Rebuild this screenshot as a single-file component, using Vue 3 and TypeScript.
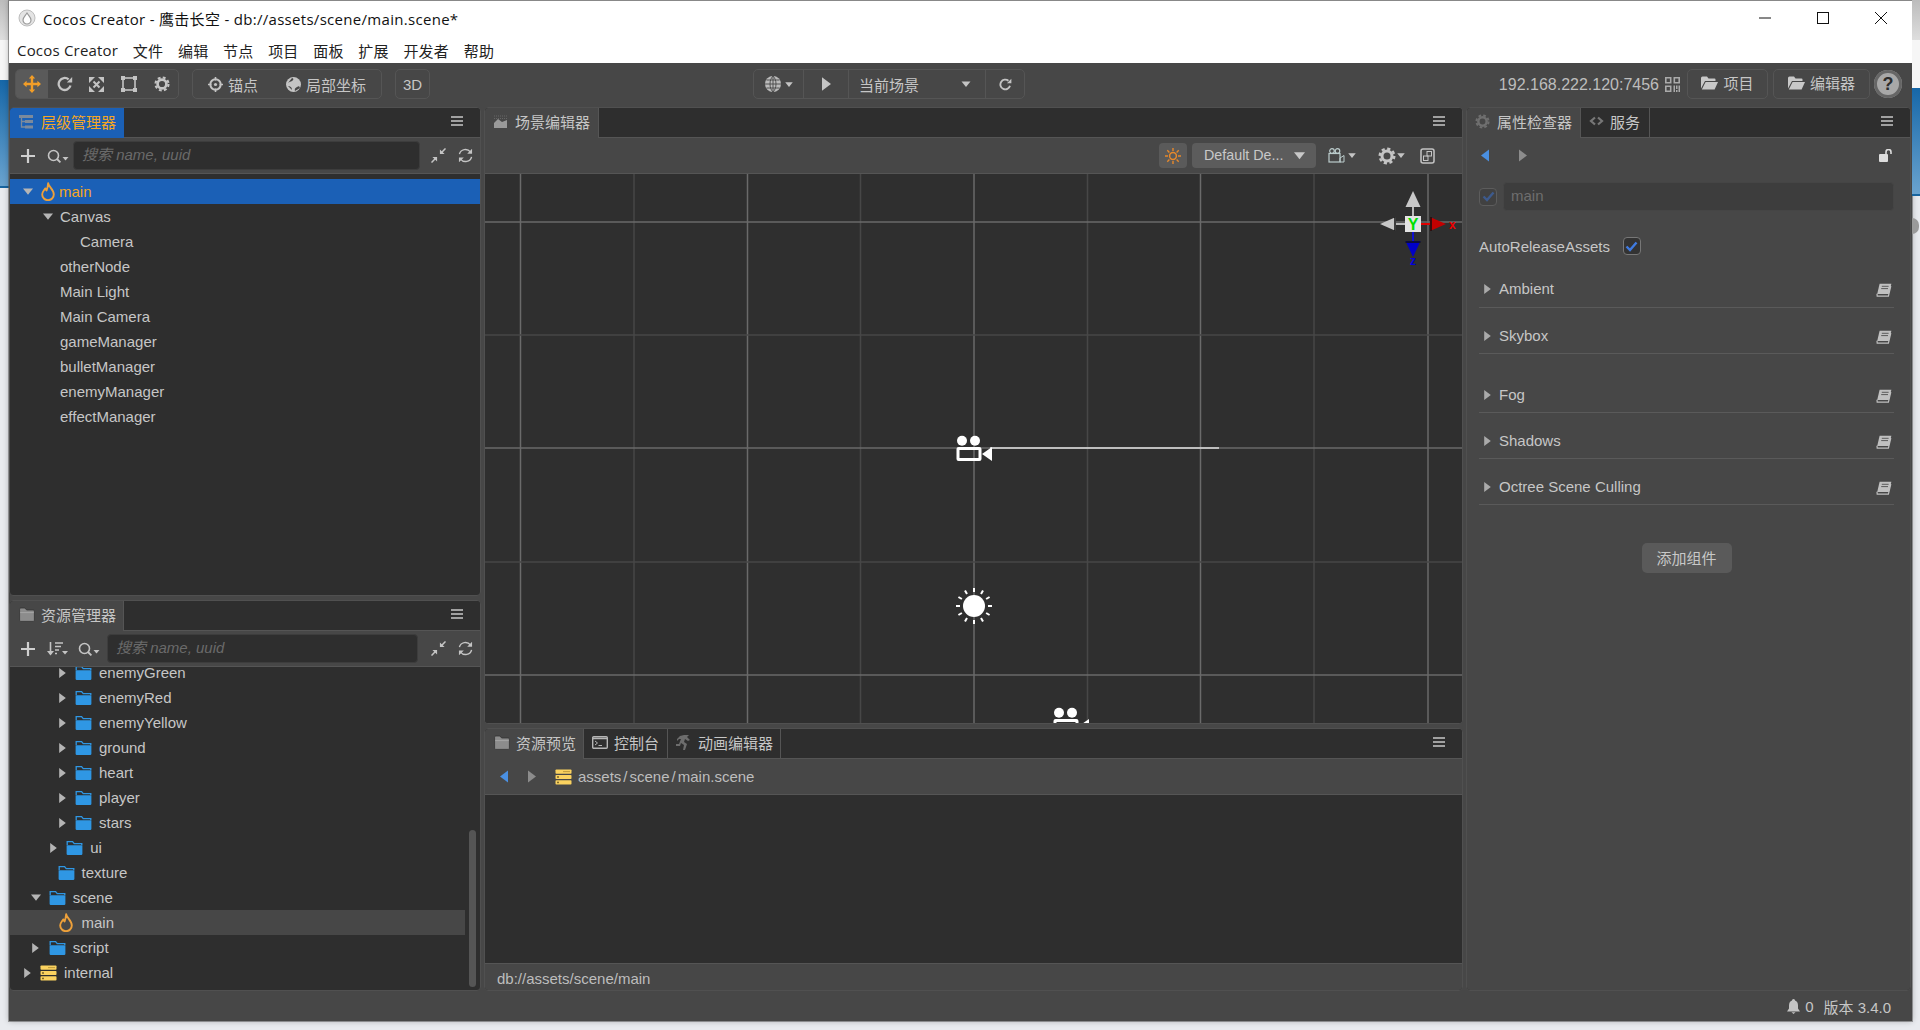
<script setup lang="ts">
interface Row { name: string; depth: number; arrow?: 'open' | 'closed'; icon?: string; cls?: string }

const menus = ['Cocos Creator', '文件', '编辑', '节点', '项目', '面板', '扩展', '开发者', '帮助']

const nodes: Row[] = [
  { name: 'main', depth: 0, arrow: 'open', icon: 'drop', cls: 'selected' },
  { name: 'Canvas', depth: 1, arrow: 'open' },
  { name: 'Camera', depth: 2 },
  { name: 'otherNode', depth: 1 },
  { name: 'Main Light', depth: 1 },
  { name: 'Main Camera', depth: 1 },
  { name: 'gameManager', depth: 1 },
  { name: 'bulletManager', depth: 1 },
  { name: 'enemyManager', depth: 1 },
  { name: 'effectManager', depth: 1 },
]

const assets: Row[] = [
  { name: 'enemyGreen', depth: 4, arrow: 'closed', icon: 'folder' },
  { name: 'enemyRed', depth: 4, arrow: 'closed', icon: 'folder' },
  { name: 'enemyYellow', depth: 4, arrow: 'closed', icon: 'folder' },
  { name: 'ground', depth: 4, arrow: 'closed', icon: 'folder' },
  { name: 'heart', depth: 4, arrow: 'closed', icon: 'folder' },
  { name: 'player', depth: 4, arrow: 'closed', icon: 'folder' },
  { name: 'stars', depth: 4, arrow: 'closed', icon: 'folder' },
  { name: 'ui', depth: 3, arrow: 'closed', icon: 'folder' },
  { name: 'texture', depth: 2, icon: 'folder' },
  { name: 'scene', depth: 1, arrow: 'open', icon: 'folder' },
  { name: 'main', depth: 2, icon: 'drop', cls: 'hover' },
  { name: 'script', depth: 1, arrow: 'closed', icon: 'folder' },
  { name: 'internal', depth: 0, arrow: 'closed', icon: 'db' },
]

const vLines = [
  { x: 35.5, bright: true }, { x: 149, bright: false }, { x: 262.5, bright: true },
  { x: 375.5, bright: false }, { x: 489, bright: true }, { x: 602.5, bright: false },
  { x: 715.5, bright: true }, { x: 829, bright: false }, { x: 943, bright: true },
]
const hLines = [
  { y: 48, bright: true }, { y: 161, bright: false }, { y: 274, bright: true },
  { y: 388, bright: false }, { y: 501, bright: true },
]
const sunRays = Array.from({ length: 12 }, (_, i) => i * 30)

const sections = [
  { name: 'Ambient', gap: false },
  { name: 'Skybox', gap: false },
  { name: 'Fog', gap: true },
  { name: 'Shadows', gap: false },
  { name: 'Octree Scene Culling', gap: false },
]
</script>

<template>
  <div class="page">
    <svg class="defs" width="0" height="0" aria-hidden="true">
      <symbol id="folder" viewBox="0 0 17 16">
        <path d="M.6 5.2H16.4V13.8a1.2 1.2 0 0 1-1.2 1.2H1.8a1.2 1.2 0 0 1-1.2-1.2Z" fill="#2f97e4" />
        <path d="M1.2 5V1.6H6.6L8.2 3.6H15.8V5" fill="none" stroke="#2f97e4" stroke-width="1.3" />
      </symbol>
      <symbol id="drop" viewBox="0 0 14 19">
        <path d="M7.2 1.2C7.4 4.5 12.8 7.6 12.8 12.4A5.8 5.8 0 0 1 1.2 12.4C1.2 9.8 3 8.4 4.2 6.4C4.6 7.4 5 8 5.6 8.4C6.4 6.4 7 3.6 7.2 1.2Z" fill="none" stroke="#eda03a" stroke-width="1.9" stroke-linejoin="round" />
      </symbol>
      <symbol id="db" viewBox="0 0 17 16">
        <rect x=".5" y=".5" width="16" height="4.2" rx=".8" fill="#fad25f" />
        <rect x=".5" y="5.9" width="16" height="4.2" rx=".8" fill="#fad25f" />
        <rect x=".5" y="11.3" width="16" height="4.2" rx=".8" fill="#fad25f" />
        <circle cx="3" cy="8" r=".9" fill="#6a5620" />
        <circle cx="3" cy="13.4" r=".9" fill="#6a5620" />
        <rect x="8" y="2.2" width="7" height=".9" fill="#b8963a" />
      </symbol>
      <symbol id="tri-r" viewBox="0 0 8 12"><path d="M0 0 8 6 0 12Z" fill="currentColor" /></symbol>
      <symbol id="tri-d" viewBox="0 0 12 8"><path d="M0 .5H12L6 8Z" fill="currentColor" /></symbol>
      <symbol id="tri-l" viewBox="0 0 8 12"><path d="M8 0 0 6 8 12Z" fill="currentColor" /></symbol>
      <symbol id="book" viewBox="0 0 16 14">
        <path d="M3.6.8H15.4L12.8 11H1.2Z" fill="#c0c0c0" />
        <path d="M1 10.8 1.2 13.2H12.4L14.8 3" fill="none" stroke="#c0c0c0" stroke-width="1.2" />
        <path d="M5.8 3.3H12.6M5.2 5.6H12" stroke="#5a5a5a" stroke-width="1" />
      </symbol>
      <symbol id="gear" viewBox="0 0 18 18">
        <circle cx="9" cy="9" r="5" fill="none" stroke="currentColor" stroke-width="3" />
        <circle cx="9" cy="9" r="7.3" fill="none" stroke="currentColor" stroke-width="2.4" stroke-dasharray="3.2 2.53" />
      </symbol>
      <symbol id="menu" viewBox="0 0 12 10">
        <path d="M0 1H12M0 5H12M0 9H12" stroke="#c8c8c8" stroke-width="1.5" />
      </symbol>
      <symbol id="plus" viewBox="0 0 14 14"><path d="M7 0V14M0 7H14" stroke="#cfcfcf" stroke-width="2.2" /></symbol>
      <symbol id="search" viewBox="0 0 22 14">
        <circle cx="6.5" cy="6.5" r="5" fill="none" stroke="#c4c4c4" stroke-width="1.6" />
        <path d="M10 10 13.4 13.4" stroke="#c4c4c4" stroke-width="1.8" />
        <path d="M15.5 8H21.5L18.5 11.5Z" fill="#c4c4c4" />
      </symbol>
      <symbol id="collapse" viewBox="0 0 16 16">
        <path d="M15.5.5 10.5 5.5M0.5 15.5 5.5 10.5" stroke="#c4c4c4" stroke-width="1.6" />
        <path d="M9.5 1.5V6.5H14.5ZM1.5 9.5H6.5V14.5Z" fill="#c4c4c4" />
      </symbol>
      <symbol id="refresh" viewBox="0 0 16 16">
        <path d="M1.5 6.6A6.6 6.6 0 0 1 13.2 4.2M14.5 9.4A6.6 6.6 0 0 1 2.8 11.8" fill="none" stroke="#c4c4c4" stroke-width="1.5" />
        <path d="M15 .8V6H9.8ZM1 15.2V10H6.2Z" fill="#c4c4c4" />
      </symbol>
      <symbol id="reload" viewBox="0 0 16 16">
        <path d="M13.5 9.5A6 6 0 1 1 11.6 3.4" fill="none" stroke="currentColor" stroke-width="2.3" />
        <path d="M9.8 6.5H15.2V1Z" fill="currentColor" />
      </symbol>
      <symbol id="panel-folder" viewBox="0 0 16 15">
        <path d="M.6 2.2A1.2 1.2 0 0 1 1.8 1H6L7.6 3H14.2A1.2 1.2 0 0 1 15.4 4.2V13.4A1 1 0 0 1 14.4 14.4H1.6A1 1 0 0 1 .6 13.4Z" fill="#8c8c8c" stroke="#333" stroke-width=".8" />
        <path d="M1.2 5.6H14.8" stroke="#a5a5a5" stroke-width="1" />
      </symbol>
      <symbol id="globe" viewBox="0 0 18 18">
        <circle cx="9" cy="9" r="8" fill="#bbb" />
        <path d="M1 9H17M2.5 5H15.5M2.5 13H15.5M9 1V17M9 1C5 4.5 5 13.5 9 17M9 1C13 4.5 13 13.5 9 17" fill="none" stroke="#474747" stroke-width=".9" />
      </symbol>
      <symbol id="camera" viewBox="0 0 36 28">
        <circle cx="6" cy="5.7" r="5" fill="#fff" />
        <circle cx="19" cy="5.7" r="5" fill="#fff" />
        <rect x="2" y="13.500" width="22" height="11" rx=".6" fill="none" stroke="#fff" stroke-width="3" />
        <path d="M26 19 36 12V26Z" fill="#fff" />
      </symbol>
    </svg>

    <div class="desk desk-left">
      <div class="desk-top"></div>
      <div class="desk-white"></div>
      <div class="desk-blue"></div>
    </div>

    <div class="window">
      <header class="titlebar">
        <svg class="app-logo" viewBox="0 0 18 18" aria-hidden="true">
          <circle cx="9" cy="9" r="8" fill="#e4e4e4" stroke="#bdbdbd" />
          <path d="M9 3.5C9.5 6 13 8 13 11A4 4 0 0 1 5 11C5 8 8.5 6 9 3.5Z" fill="#fff" stroke="#999" stroke-width="1.2" />
        </svg>
        <span class="title-text">Cocos Creator - 鹰击长空 - db://assets/scene/main.scene*</span>
        <div class="win-ctrls">
          <svg class="win-btn" viewBox="0 0 12 12"><path d="M0 6H12" stroke="#111" stroke-width="1" /></svg>
          <svg class="win-btn" viewBox="0 0 12 12"><rect x=".5" y=".5" width="11" height="11" fill="none" stroke="#111" /></svg>
          <svg class="win-btn" viewBox="0 0 12 12"><path d="M0 0 12 12M12 0 0 12" stroke="#111" stroke-width="1" /></svg>
        </div>
      </header>
      <nav class="menubar">
        <span v-for="m in menus" :key="m">{{ m }}</span>
      </nav>

      <div class="editor">
        <div class="topbar">
          <div class="group g-tools">
            <button class="tool active">
              <svg width="18" height="18" viewBox="0 0 18 18"><path d="M9 0 12.2 3.6H10.2V7.8H14.4V5.8L18 9 14.4 12.2V10.2H10.2V14.4H12.2L9 18 5.8 14.4H7.8V10.2H3.6V12.2L0 9 3.6 5.8V7.8H7.8V3.6H5.8Z" fill="#f29d27" /></svg>
            </button>
            <button class="tool"><svg class="grey" width="16" height="16"><use href="#reload" /></svg></button>
            <button class="tool">
              <svg width="15" height="15" viewBox="0 0 15 15"><path d="M4.5 4.5 10.5 10.5M10.5 4.5 4.5 10.5" stroke="#c4c4c4" stroke-width="2" /><path d="M0 0H6L0 6ZM15 0H9L15 6ZM0 15H6L0 9ZM15 15H9L15 9Z" fill="#c4c4c4" /></svg>
            </button>
            <button class="tool">
              <svg width="16" height="16" viewBox="0 0 16 16"><rect x="2" y="2" width="12" height="12" fill="none" stroke="#c4c4c4" stroke-width="1.6" /><path d="M0 0H4V4H0ZM12 0H16V4H12ZM0 12H4V16H0ZM12 12H16V16H12Z" fill="#c4c4c4" /></svg>
            </button>
            <button class="tool"><svg class="grey" width="16" height="16"><use href="#gear" /></svg></button>
          </div>
          <div class="group g-pivot">
            <span class="pivot-item">
              <svg width="15" height="15" viewBox="0 0 15 15"><circle cx="7.5" cy="7.5" r="5.2" fill="none" stroke="#c4c4c4" stroke-width="2" /><circle cx="7.5" cy="7.5" r="1.6" fill="#c4c4c4" /><path d="M7.5 0V3.5M7.5 11.5V15M0 7.5H3.5M11.5 7.5H15" stroke="#c4c4c4" stroke-width="1.6" /></svg>
              锚点
            </span>
            <span class="pivot-item">
              <svg width="15" height="15" viewBox="0 0 15 15"><circle cx="7.5" cy="7.5" r="7.5" fill="#c4c4c4" /><path d="M2 6C4 4 6 5 7 3C8 2 7 1 6 1M9 14C8 11 11 10 13 9L14 11ZM2 9C4 9 6 10 6 13" fill="#474747" /></svg>
              局部坐标
            </span>
          </div>
          <div class="group g-3d">3D</div>
          <div class="group g-play">
            <span class="p-cell p-globe">
              <svg width="18" height="18"><use href="#globe" /></svg>
              <svg class="caret" width="8" height="5"><use href="#tri-d" /></svg>
            </span>
            <span class="p-cell p-run"><svg class="grey" width="9" height="16"><use href="#tri-r" /></svg></span>
            <span class="p-cell p-scene">
              当前场景
              <svg class="caret" width="10" height="6"><use href="#tri-d" /></svg>
            </span>
            <span class="p-cell p-reload"><svg class="grey" width="13" height="13"><use href="#reload" /></svg></span>
          </div>
          <div class="top-right">
            <span class="ip">192.168.222.120:7456</span>
            <svg class="qr" width="15" height="15" viewBox="0 0 15 15"><path d="M0 0H6.5V6.5H0ZM1.6 1.6V4.9H4.9V1.6ZM8.5 0H15V6.5H8.5ZM10.1 1.6V4.9H13.4V1.6ZM0 8.5H6.5V15H0ZM1.6 10.1V13.4H4.9V10.1Z" fill="#aaa" fill-rule="evenodd" /><path d="M8.5 8.5H10V15H8.5ZM11 8.5H12.5V12H11ZM13.5 8.5H15V15H13.5ZM11 13H12.5V15H11Z" fill="#aaa" /></svg>
            <button class="btn-open b-project">
              <svg width="17" height="14" viewBox="0 0 17 14"><path d="M0 2A1.5 1.5 0 0 1 1.5.5H6L7.5 2.5H13.5A1 1 0 0 1 14.5 3.5V5H4L0 12.5Z" fill="#c8c8c8" /><path d="M4.6 6H17L13.6 13.5H.8Z" fill="#c8c8c8" /></svg>
              项目
            </button>
            <button class="btn-open b-editor">
              <svg width="17" height="14" viewBox="0 0 17 14"><path d="M0 2A1.5 1.5 0 0 1 1.5.5H6L7.5 2.5H13.5A1 1 0 0 1 14.5 3.5V5H4L0 12.5Z" fill="#c8c8c8" /><path d="M4.6 6H17L13.6 13.5H.8Z" fill="#c8c8c8" /></svg>
              编辑器
            </button>
            <span class="help">?</span>
          </div>
        </div>

        <div class="workspace">
          <div class="col col-left">
            <section class="panel p-hier">
              <div class="tabs">
                <div class="tab tab-focus">
                  <svg width="14" height="14" viewBox="0 0 14 14"><path d="M0 0H14V3H0ZM6 5H14V8H6ZM6 10.500H14V13.500H6Z" fill="#7c8a9c" /><path d="M2.500 3V12H6M2.500 6.500H6" fill="none" stroke="#7c8a9c" stroke-width="1.300" /></svg>
                  层级管理器
                </div>
                <svg class="hamb" width="12" height="10"><use href="#menu" /></svg>
              </div>
              <div class="bar">
                <svg class="b-plus" width="14" height="14"><use href="#plus" /></svg>
                <svg class="b-search" width="22" height="14"><use href="#search" /></svg>
                <div class="search">搜索 name, uuid</div>
                <svg class="b-col" width="15" height="15"><use href="#collapse" /></svg>
                <svg class="b-ref" width="15" height="15"><use href="#refresh" /></svg>
              </div>
              <div class="tree hier-tree">
                <div v-for="n in nodes" :key="n.name" class="hrow" :class="n.cls" :style="{ paddingLeft: 10 + 20 * n.depth + 'px' }">
                  <span class="arrow">
                    <svg v-if="n.arrow === 'open'" width="10" height="7"><use href="#tri-d" /></svg>
                  </span>
                  <svg v-if="n.icon" class="hicon" width="14" height="19"><use :href="'#' + n.icon" /></svg>
                  <span class="label">{{ n.name }}</span>
                </div>
              </div>
            </section>

            <section class="panel p-assets">
              <div class="tabs">
                <div class="tab tab-asset">
                  <svg width="16" height="15"><use href="#panel-folder" /></svg>
                  资源管理器
                </div>
                <svg class="hamb" width="12" height="10"><use href="#menu" /></svg>
              </div>
              <div class="bar bar-assets">
                <svg class="b-plus" width="14" height="14"><use href="#plus" /></svg>
                <svg class="b-sort" width="21" height="14" viewBox="0 0 21 14"><path d="M3.500 0V12" stroke="#c4c4c4" stroke-width="1.600" /><path d="M0 9H7L3.500 13.500Z" fill="#c4c4c4" /><path d="M8 1H16M8 4.500H14M8 8H12M8 11.500H10" stroke="#c4c4c4" stroke-width="1.500" /><path d="M15 9H21L18 12.500Z" fill="#c4c4c4" /></svg>
                <svg class="b-search" width="22" height="14"><use href="#search" /></svg>
                <div class="search">搜索 name, uuid</div>
                <svg class="b-col" width="15" height="15"><use href="#collapse" /></svg>
                <svg class="b-ref" width="15" height="15"><use href="#refresh" /></svg>
              </div>
              <div class="tree asset-tree">
                <div class="asset-scroll">
                  <div v-for="a in assets" :key="a.name + a.depth" class="arow" :class="a.cls" :style="{ paddingLeft: 9 + 8.75 * a.depth + 'px' }">
                    <span class="arrow">
                      <svg v-if="a.arrow === 'open'" width="10" height="7"><use href="#tri-d" /></svg>
                      <svg v-else-if="a.arrow === 'closed'" width="7" height="10"><use href="#tri-r" /></svg>
                    </span>
                    <span class="aicon">
                      <svg v-if="a.icon === 'drop'" width="14" height="19"><use href="#drop" /></svg>
                      <svg v-else width="17" height="16"><use :href="'#' + a.icon" /></svg>
                    </span>
                    <span class="label">{{ a.name }}</span>
                  </div>
                </div>
                <div class="scrollbar"></div>
              </div>
            </section>
          </div>

          <div class="col col-center">
            <section class="panel p-scene-panel">
              <div class="tabs">
                <div class="tab tab-scene">
                  <svg width="13" height="13" viewBox="0 0 13 13"><path d="M0 13V8L4 4 8 7 13 5V13Z" fill="#9a9a9a" /><path d="M0 1H13M0 3.500H13" stroke="#666" stroke-dasharray="1 1" /></svg>
                  场景编辑器
                </div>
                <svg class="hamb" width="12" height="10"><use href="#menu" /></svg>
              </div>
              <div class="scene-bar">
                <span class="light-btn">
                  <svg width="16" height="16" viewBox="0 0 16 16"><circle cx="8" cy="8" r="3.400" fill="none" stroke="#e8892b" stroke-width="1.500" /><path d="M8 0V3M8 13V16M0 8H3M13 8H16M2.300 2.300 4.400 4.400M11.600 11.600 13.700 13.700M13.700 2.300 11.600 4.400M4.400 11.600 2.300 13.700" stroke="#e8892b" stroke-width="1.400" /></svg>
                </span>
                <span class="drop-btn">Default De...<svg width="11" height="9"><use href="#tri-d" /></svg></span>
                <span class="s-cam">
                  <svg width="17" height="15" viewBox="0 0 17 15"><circle cx="4" cy="3" r="2.300" fill="none" stroke="#bcc" stroke-width="1.200" /><circle cx="9.500" cy="3" r="2.300" fill="none" stroke="#bcc" stroke-width="1.200" /><rect x="1" y="5.500" width="11" height="8.500" fill="none" stroke="#bcc" stroke-width="1.200" /><path d="M12 10 16 7.500V14H12Z" fill="none" stroke="#bcc" stroke-width="1" /></svg>
                  <svg class="caret" width="8" height="5"><use href="#tri-d" /></svg>
                </span>
                <span class="s-gear">
                  <svg class="grey" width="18" height="18"><use href="#gear" /></svg>
                  <svg class="caret" width="8" height="5"><use href="#tri-d" /></svg>
                </span>
                <svg class="s-box" width="15" height="16" viewBox="0 0 15 16"><rect x="1" y="1" width="13" height="14" rx="2" fill="none" stroke="#c4c4c4" stroke-width="1.500" /><rect x="3.500" y="8" width="4.500" height="4.500" fill="none" stroke="#c4c4c4" /><rect x="7" y="3.500" width="4.500" height="4.500" fill="none" stroke="#c4c4c4" /></svg>
              </div>
              <div class="viewport">
                <svg class="canvas" width="977" height="550" viewBox="0 0 977 550" aria-hidden="true">
                  <line v-for="v in vLines" :key="v.x" :x1="v.x" :x2="v.x" y1="0" y2="550" :stroke="v.bright ? '#6a6a6a' : '#474747'" stroke-width="1.500" />
                  <line v-for="h in hLines" :key="h.y" x1="0" x2="977" :y1="h.y" :y2="h.y" :stroke="h.bright ? '#6a6a6a' : '#474747'" stroke-width="1.500" />
                  <line x1="505" x2="734" y1="274" y2="274" stroke="#e0e0e0" stroke-width="1.500" />
                  <use href="#camera" x="471" y="261" width="36" height="28" />
                  <use href="#camera" x="568" y="533" width="36" height="28" />
                  <g transform="translate(489 432)">
                    <circle r="11" fill="#fff" />
                    <line v-for="r in sunRays" :key="r" x1="14" x2="18" y1="0" y2="0" stroke="#fff" stroke-width="2" :transform="`rotate(${r})`" />
                  </g>
                  <g transform="translate(928 50)">
                    <path d="M0-8V-18M-8 0H-18" stroke="#bbb" stroke-width="2" />
                    <path d="M0-33-7.500-17H7.500Z" fill="#c8c8c8" />
                    <path d="M-33 0-17-7V7Z" fill="#c8c8c8" />
                    <path d="M-18-7V7" stroke="#111" stroke-width="1.500" />
                    <path d="M8 0H18" stroke="#e00000" stroke-width="2" />
                    <path d="M33 0 17-7V7Z" fill="#c40000" />
                    <path d="M18-7V7" stroke="#111" stroke-width="1.500" />
                    <path d="M0 8V18" stroke="#1010d0" stroke-width="2" />
                    <path d="M0 33-7.500 17H7.500Z" fill="#0000c8" />
                    <path d="M-7.500 18H7.500" stroke="#111" stroke-width="1.500" />
                    <rect x="-8" y="-8" width="16" height="16" fill="#e4e4e4" />
                    <text x="0" y="5.500" text-anchor="middle" class="gz" fill="#00e000">Y</text>
                    <text x="36" y="5" class="gz small" fill="#f00000">x</text>
                    <text x="0" y="41" text-anchor="middle" class="gz small" fill="#0000e0">z</text>
                  </g>
                </svg>
              </div>
            </section>

            <section class="panel p-preview">
              <div class="tabs">
                <div class="tab tab-a">
                  <svg width="16" height="15"><use href="#panel-folder" /></svg>
                  资源预览
                </div>
                <div class="tab tab-off tab-b">
                  <svg width="16" height="13" viewBox="0 0 16 13"><rect x=".7" y=".7" width="14.600" height="11.600" rx="1" fill="#2e2e2e" stroke="#b5b5b5" stroke-width="1.400" /><path d="M.7 2.500H15.300" stroke="#b5b5b5" stroke-width="1.500" /><path d="M3 5 5.500 7 3 9M6.500 9.500H10" fill="none" stroke="#b5b5b5" stroke-width="1" /></svg>
                  控制台
                </div>
                <div class="tab tab-off tab-c">
                  <svg width="15" height="15" viewBox="0 0 15 15"><path d="M8 0H13L11 2 14 5 12 6 9 4 8 7 11 9 9 15H7L8 10 5 8 4 11 0 11V9H3L5 4H3L1 6V4L4 1Z" fill="#6d6d6d" /></svg>
                  动画编辑器
                </div>
                <svg class="hamb" width="12" height="10"><use href="#menu" /></svg>
              </div>
              <div class="path-bar">
                <svg class="blue" width="8" height="13"><use href="#tri-l" /></svg>
                <svg class="gtri second" width="8" height="13"><use href="#tri-r" /></svg>
                <svg class="path-db" width="17" height="16"><use href="#db" /></svg>
                <span class="path-text">assets<i>/</i>scene<i>/</i>main.scene</span>
              </div>
              <div class="preview-body"></div>
              <div class="preview-foot">db://assets/scene/main</div>
            </section>
          </div>

          <section class="panel col-right">
            <div class="tabs">
              <div class="tab tab-insp">
                <svg class="dim" width="15" height="15"><use href="#gear" /></svg>
                属性检查器
              </div>
              <div class="tab tab-off tab-svc">
                <svg width="15" height="10" viewBox="0 0 15 10"><path d="M6 1.500 2 5 6 8.500M9 1.500 13 5 9 8.500" fill="none" stroke="#777" stroke-width="2.200" /></svg>
                服务
              </div>
              <svg class="hamb" width="12" height="10"><use href="#menu" /></svg>
            </div>
            <div class="insp">
              <div class="insp-nav">
                <svg class="blue" width="8" height="13"><use href="#tri-l" /></svg>
                <svg class="gtri second2" width="8" height="13"><use href="#tri-r" /></svg>
                <svg class="lock" width="15" height="13" viewBox="0 0 15 13"><rect x="0" y="5" width="9" height="8" rx="1" fill="#ddd" /><path d="M7 5V3A2.500 2.500 0 0 1 12 3V5" fill="none" stroke="#ddd" stroke-width="1.600" /></svg>
              </div>
              <div class="name-row">
                <span class="chk chk-off"><svg width="13" height="11" viewBox="0 0 13 11"><path d="M1.500 5.500 5 9 11.500 1.500" fill="none" stroke="#3d5a8c" stroke-width="2.400" /></svg></span>
                <div class="name-input">main</div>
              </div>
              <div class="auto-row">
                <span>AutoReleaseAssets</span>
                <span class="chk chk-on"><svg width="13" height="11" viewBox="0 0 13 11"><path d="M1.500 5.500 5 9 11.500 1.500" fill="none" stroke="#3f7ae0" stroke-width="2.400" /></svg></span>
              </div>
              <div v-for="s in sections" :key="s.name" class="sect" :class="{ 'sect-gap': s.gap }">
                <svg class="gtri2" width="7" height="10"><use href="#tri-r" /></svg>
                <span class="sect-name">{{ s.name }}</span>
                <svg class="book" width="16" height="14"><use href="#book" /></svg>
              </div>
              <div class="add-wrap"><button class="add">添加组件</button></div>
            </div>
          </section>
        </div>

        <footer class="statusbar">
          <svg width="13" height="15" viewBox="0 0 13 15"><path d="M6.500 0C7.500 0 8 .8 8 1.500C10 2 11 4 11 6.500V9.500L13 12.500H0L2 9.500V6.500C2 4 3 2 5 1.500C5 .8 5.500 0 6.500 0Z" fill="#c4c4c4" /><path d="M4.500 13.300H8.500L6.500 15Z" fill="#c4c4c4" /></svg>
          <span class="count">0</span>
          <span class="ver">版本 3.4.0</span>
        </footer>
      </div>
    </div>

    <div class="desk desk-right">
      <div class="desk-top"></div>
      <div class="desk-white"></div>
      <div class="desk-blue"></div>
      <div class="desk-dot"></div>
    </div>
  </div>
</template>

<style scoped>
.page, .page * { box-sizing: border-box; }
.page {
  width: 1920px;
  height: 1030px;
  display: flex;
  background: #e9ebef;
  overflow: hidden;
  font-family: "Liberation Sans", "Noto Sans CJK SC", sans-serif;
  font-size: 15px;
  color: #c6c6c6;
}
.defs { position: absolute; }
button { font: inherit; color: inherit; background: none; border: 0; padding: 0; }
svg { display: block; flex: none; }
.grey { color: #c4c4c4; }
.dim { color: #6f6f6f; }
.caret { color: #c4c4c4; }
.blue { color: #4a90e2; }
.gtri { color: #8c8c8c; }
.gtri2 { color: #aaa; }

.desk { flex: none; }
.desk-left { width: 9px; }
.desk-right { width: 8px; }
.desk-top { height: 40px; background: linear-gradient(#bcbcbc, #dedede); }
.desk-white { height: 40px; background: #f6f6f6; }
.desk-right .desk-white { height: 48px; }
.desk-blue { height: 108px; background: linear-gradient(#1667a8, #6aa3cf); border-bottom: 2px solid #17649f; }
.desk-right .desk-blue { height: 108px; }
.desk-dot { width: 7px; height: 16px; margin-top: 22px; border-radius: 0 8px 8px 0; background: #9a9a9a; }

.window {
  width: 1903px;
  height: 1021px;
  flex: none;
  display: flex;
  flex-direction: column;
  border-top: 1px solid #888;
  box-shadow: 0 0 0 1px rgba(90, 90, 90, .55), 0 0 6px rgba(0, 0, 0, .3);
  background: #fff;
}
.titlebar {
  height: 34px;
  flex: none;
  display: flex;
  align-items: center;
  color: #111;
  padding-left: 9px;
  font-family: "Open Sans", "Noto Sans CJK SC", sans-serif;
  font-size: 15px;
  letter-spacing: .3px;
}
.app-logo { width: 18px; height: 18px; margin-right: 7px; }
.title-text { white-space: nowrap; }
.win-ctrls { margin-left: auto; display: flex; gap: 46px; margin-right: 25px; }
.win-btn { width: 12px; height: 12px; }
.menubar {
  height: 28px;
  flex: none;
  display: flex;
  align-items: center;
  gap: 14.700px;
  padding: 2px 0 0 8px;
  color: #222;
  font-family: "Open Sans", "Noto Sans CJK SC", sans-serif;
  font-size: 15px;
  letter-spacing: .2px;
}

.editor { flex: 1; min-height: 0; background: #474747; display: flex; flex-direction: column; }

.topbar { height: 44px; flex: none; display: flex; align-items: center; padding: 0 0 2px 6px; }
.group { height: 30px; border: 1px solid #555; border-radius: 5px; display: flex; align-items: center; }
.g-tools { width: 164px; overflow: hidden; }
.tool { width: 32.400px; height: 100%; display: flex; align-items: center; justify-content: center; }
.tool.active { background: #5a5a5a; }
.g-pivot { width: 190px; margin-left: 13px; padding-left: 15px; gap: 28px; }
.pivot-item { display: flex; align-items: center; gap: 5px; white-space: nowrap; }
.g-3d { width: 35px; margin-left: 13px; justify-content: center; font-size: 15px; }
.g-play { width: 272px; margin-left: 323px; overflow: visible; }
.p-cell { height: 100%; display: flex; align-items: center; border-right: 1px solid #555; }
.p-globe { width: 50px; padding-left: 10px; gap: 3px; }
.p-run { width: 45px; justify-content: center; }
.p-scene { width: 137px; padding-left: 10px; gap: 42px; white-space: nowrap; }
.p-reload { border: 0; width: 38px; justify-content: center; }
.top-right { margin-left: auto; display: flex; align-items: center; padding-right: 10px; }
.ip { font-size: 16px; color: #bdbdbd; white-space: nowrap; margin-top: 1px; }
.qr { margin: 0 7px 0 6px; }
.btn-open { height: 30px; border: 1px solid #555; border-radius: 5px; display: flex; align-items: center; justify-content: center; gap: 5px; padding-bottom: 3px; }
.b-project { width: 81px; }
.b-editor { width: 97px; margin-left: 5px; }
.help {
  width: 28px;
  height: 28px;
  margin-left: 4px;
  border-radius: 50%;
  background: #a8a8a8;
  box-shadow: inset 0 0 0 3px #666;
  color: #2c2c2c;
  font-weight: 700;
  font-size: 18px;
  display: flex;
  align-items: center;
  justify-content: center;
}

.workspace { height: 884px; flex: none; display: flex; gap: 3px; }
.col { display: flex; flex-direction: column; min-height: 0; }
.col-left { width: 472px; flex: none; gap: 4px; }
.col-center { width: 979px; flex: none; gap: 4px; }
.col-right { width: 445px; flex: none; background: #474747; }

.panel {
  border: 1px solid #505050;
  border-radius: 4px;
  overflow: hidden;
  display: flex;
  flex-direction: column;
  background: #2e2e2e;
}
.p-hier { height: 489px; flex: none; }
.p-assets { height: 391px; flex: none; }
.p-scene-panel { height: 617px; flex: none; }
.p-preview { height: 263px; flex: none; }

.tabs {
  height: 30px;
  flex: none;
  display: flex;
  align-items: stretch;
  background: #2e2e2e;
  border-bottom: 1px solid #555;
  position: relative;
}
.tab {
  width: 114px;
  margin-bottom: -1px;
  display: flex;
  align-items: center;
  gap: 7px;
  padding: 0 0 3px 9px;
  background: #474747;
  border-right: 1px solid #555;
  white-space: nowrap;
}
.tab-focus { background: #1b60b6; color: #f5a623; border-right: 0; gap: 8px; }
.tab-asset { gap: 6px; }
.tab-scene { gap: 8px; }
.tab-off { background: #2e2e2e; margin-bottom: 0; }
.tab-a { width: 99px; gap: 6px; }
.tab-b { width: 84px; gap: 6px; padding-left: 8px; }
.tab-c { width: 113px; gap: 7px; padding-left: 8px; }
.tab-insp { gap: 7px; padding-left: 8px; }
.tab-svc { width: 69px; gap: 6px; padding-left: 8px; }
.hamb { position: absolute; right: 17px; top: 8px; }

.bar { height: 36px; flex: none; display: flex; align-items: center; background: #474747; border-bottom: 1px solid #555; padding-left: 11px; }
.b-search { margin-left: 12px; }
.b-sort { margin-left: 12px; }
.bar-assets .b-search { margin-left: 10px; }
.search {
  height: 29px;
  margin-left: 4px;
  flex: 1;
  min-width: 0;
  background: #2e2e2e;
  border: 1px solid #3d3d3d;
  border-radius: 4px;
  padding-left: 8px;
  line-height: 26px;
  font-style: italic;
  color: #6a6a6a;
  white-space: nowrap;
}
.bar-assets .search { margin-left: 7px; }
.b-col { margin-left: 11px; }
.bar-assets .b-col { margin-left: 13px; }
.b-ref { margin: 0 7px 0 12px; }

.tree { flex: 1; min-height: 0; }
.hier-tree { padding-top: 5px; }
.hrow { height: 25px; display: flex; align-items: center; white-space: nowrap; }
.hrow.selected { background: #1b60b6; color: #f5a623; }
.arrow { width: 16px; height: 25px; flex: none; display: flex; align-items: center; justify-content: center; color: #b5b5b5; }
.hrow .label { margin-left: 4px; }
.hicon { margin-left: 5px; }

.asset-tree { position: relative; overflow: hidden; }
.asset-scroll { margin-top: -7px; margin-right: 15px; }
.arow { height: 25px; display: flex; align-items: center; white-space: nowrap; }
.arow.hover { background: #474747; }
.aicon { width: 17px; height: 25px; margin-left: 5px; flex: none; display: flex; align-items: center; justify-content: center; }
.arow .label { margin-left: 7px; }
.scrollbar { position: absolute; right: 4px; top: 163px; bottom: 3px; width: 7px; border-radius: 4px; background: #555; }

.scene-bar { height: 36px; flex: none; display: flex; align-items: center; background: #474747; border-bottom: 1px solid #555; justify-content: flex-end; padding-right: 27px; }
.light-btn { width: 28px; height: 25px; background: #5a5a5a; border-radius: 4px; display: flex; align-items: center; justify-content: center; }
.drop-btn { width: 124px; height: 25px; margin-left: 5px; background: #5c5c5c; border-radius: 4px; display: flex; align-items: center; justify-content: space-between; padding: 0 11px 1px 12px; font-size: 14.300px; color: #c8c8c8; white-space: nowrap; }
.s-cam { margin-left: 12px; display: flex; align-items: center; gap: 3px; }
.s-gear { margin-left: 22px; display: flex; align-items: center; gap: 1px; }
.s-box { margin-left: 15px; }

.viewport { flex: 1; min-height: 0; overflow: hidden; background: #2f2f2f; position: relative; }
.canvas { display: block; }
.gz { font: 700 16px "Liberation Sans", sans-serif; }
.gz.small { font-size: 12px; }

.path-bar { height: 36px; flex: none; display: flex; align-items: center; background: #474747; border-bottom: 1px solid #555; padding-left: 15px; }
.second { margin-left: 20px; }
.path-db { margin-left: 19px; }
.path-text { margin-left: 6px; color: #bdbdbd; white-space: nowrap; }
.path-text i { font-style: normal; margin: 0 2px; }
.preview-body { flex: 1; background: #2e2e2e; }
.preview-foot { height: 27px; flex: none; background: #474747; border-top: 1px solid #555; padding: 3px 0 0 12px; line-height: 24px; color: #bdbdbd; }

.insp { flex: 1; min-height: 0; background: #474747; padding: 0 16px 0 12px; }
.insp-nav { height: 35px; display: flex; align-items: center; padding-left: 2px; }
.second2 { margin-left: 30px; }
.lock { margin-left: auto; }
.chk { width: 18px; height: 18px; border-radius: 4px; display: flex; align-items: center; justify-content: center; flex: none; }
.chk-off { border: 1px solid #5c5c5c; background: #414141; }
.chk-on { border: 1px solid #777; background: #333; }
.name-row { height: 29px; margin-top: 9px; display: flex; align-items: center; gap: 6px; }
.name-input { flex: 1; height: 29px; border: 1px solid #454545; border-radius: 4px; background: #3d3d3d; padding-left: 7px; line-height: 26px; color: #6e6e6e; }
.auto-row { height: 18px; margin-top: 26px; display: flex; align-items: center; gap: 13px; white-space: nowrap; }
.sect { height: 46px; display: flex; align-items: center; border-bottom: 1px solid #5a5a5a; padding: 10px 2px 0 5px; }
.auto-row + .sect { margin-top: 6px; height: 47px; padding-top: 9px; }
.sect-gap { margin-top: 13px; }
.sect-name { margin-left: 8px; }
.book { margin-left: auto; margin-top: 2px; }
.add-wrap { display: flex; justify-content: center; margin-top: 38px; }
.add { width: 90px; height: 30px; background: #5a5a5a; border-radius: 5px; color: #c8c8c8; padding-bottom: 2px; }

.statusbar { height: 30px; flex: none; display: flex; align-items: center; justify-content: flex-end; padding-right: 21px; }
.count { margin-left: 5px; }
.ver { margin-left: 10px; white-space: nowrap; }
</style>

<style>
html, body { margin: 0; padding: 0; overflow: hidden; }
</style>
